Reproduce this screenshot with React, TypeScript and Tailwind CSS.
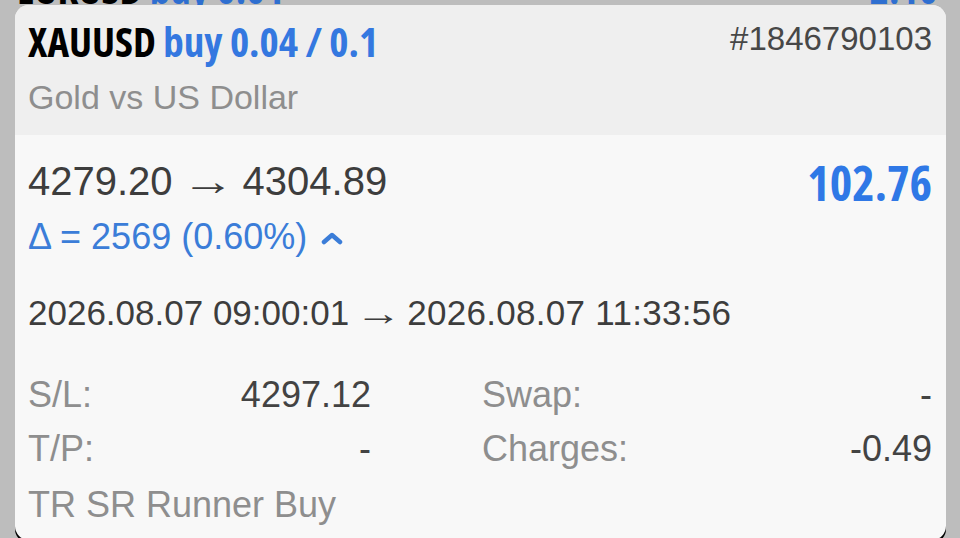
import React from "react";

const cond = "font-['Open_Sans','DejaVu_Sans',sans-serif] font-bold [font-stretch:75%]";
const sans = "font-['Liberation_Sans','Arial',sans-serif]";

function Row({ label, value, right, rightValue, top }: { label: string; value: string; right?: string; rightValue?: string; top: string }) {
  return (
    <div className={`flex ${top}`}>
      <div className="flex w-[343px] justify-between h-[42px] leading-[42px] text-[36px]">
        <span className="text-[#8e8e8e]">{label}</span>
        <span className="text-[#434343]">{value}</span>
      </div>
      {right !== undefined && (
        <div className="ml-[111px] flex w-[450px] justify-between h-[42px] leading-[42px] text-[36px]">
          <span className="text-[#8e8e8e]">{right}</span>
          <span className="text-[#434343]">{rightValue}</span>
        </div>
      )}
    </div>
  );
}

export default function App() {
  return (
    <div className={`w-[960px] h-[538px] overflow-hidden bg-[#bdbdbd] ${sans}`}>
      {/* peeking previous row */}
      <div className="h-[5px] overflow-hidden">
        <div className="mt-[-34px] flex justify-between pl-[17px] pr-[22px] h-[44px] leading-[44px]">
          <div className={`${cond} text-[41px] whitespace-nowrap`}>
            <span className="text-black">EURUSD</span>{" "}
            <span className="text-[#2f6fd0]">buy 0.01</span>
          </div>
          <div className={`${cond} text-[41px] text-[#2f6fd0]`}>2.10</div>
        </div>
      </div>
      {/* card */}
      <div className="ml-[15px] w-[931px] h-[535px] rounded-[14px] overflow-hidden bg-[#f8f8f8] shadow-[0_3px_0_#000]">
        <div className="h-[130px] bg-[#efefef] pl-[13px] pr-[14px] pt-[14px]">
          <div className="flex justify-between items-start">
            <div className={`${cond} text-[41px] h-[44px] leading-[44px] whitespace-nowrap`}>
              <span className="text-black">XAUUSD</span>{" "}
              <span className="text-[#3478e0]">buy 0.04 / 0.1</span>
            </div>
            <div className="mt-[1px] text-[33px] h-[38px] leading-[38px] text-[#474747]">#1846790103</div>
          </div>
          <div className="mt-[14px] text-[34px] h-[40px] leading-[40px] text-[#8e8e8e]">Gold vs US Dollar</div>
        </div>
        <div className="pl-[13px] pr-[14px]">
          <div className="flex justify-between items-start mt-[22px] h-[48px]">
            <div className="text-[40px] h-[48px] leading-[48px] text-[#3d3d3d] whitespace-nowrap">
              4279.20
              <span className="inline-block w-[70px] text-center">
                <span className="inline-block scale-x-[1.32]">→</span>
              </span>
              4304.89
            </div>
            <div className={`${cond} text-[48px] h-[51px] leading-[51px] text-[#2f78e6]`}>102.76</div>
          </div>
          <div className="mt-[10px] flex items-center h-[44px]">
            <span className="text-[36px] leading-[44px] text-[#3b7dd8]">Δ = 2569 (0.60%)</span>
            <svg className="ml-[14px] mt-[2px]" width="22" height="14" viewBox="0 0 22 14">
              <polyline points="3,11 11,4 19,11" fill="none" stroke="#3b7dd8" strokeWidth="4.5" strokeLinecap="round" strokeLinejoin="round" />
            </svg>
          </div>
          <div className="mt-[33px] text-[35px] h-[42px] leading-[42px] text-[#3d3d3d] whitespace-nowrap">
            2026.08.07 09:00:01
            <span className="inline-block w-[58px] text-center">
              <span className="inline-block scale-x-[1.33]">→</span>
            </span>
            <span className="tracking-[0.3px]">2026.08.07 11:33:56</span>
          </div>
          <Row top="mt-[40px]" label="S/L:" value="4297.12" right="Swap:" rightValue="-" />
          <Row top="mt-[12px]" label="T/P:" value="-" right="Charges:" rightValue="-0.49" />
          <div className="mt-[14px] text-[36px] h-[42px] leading-[42px] text-[#8e8e8e]">TR SR Runner Buy</div>
        </div>
      </div>
    </div>
  );
}
